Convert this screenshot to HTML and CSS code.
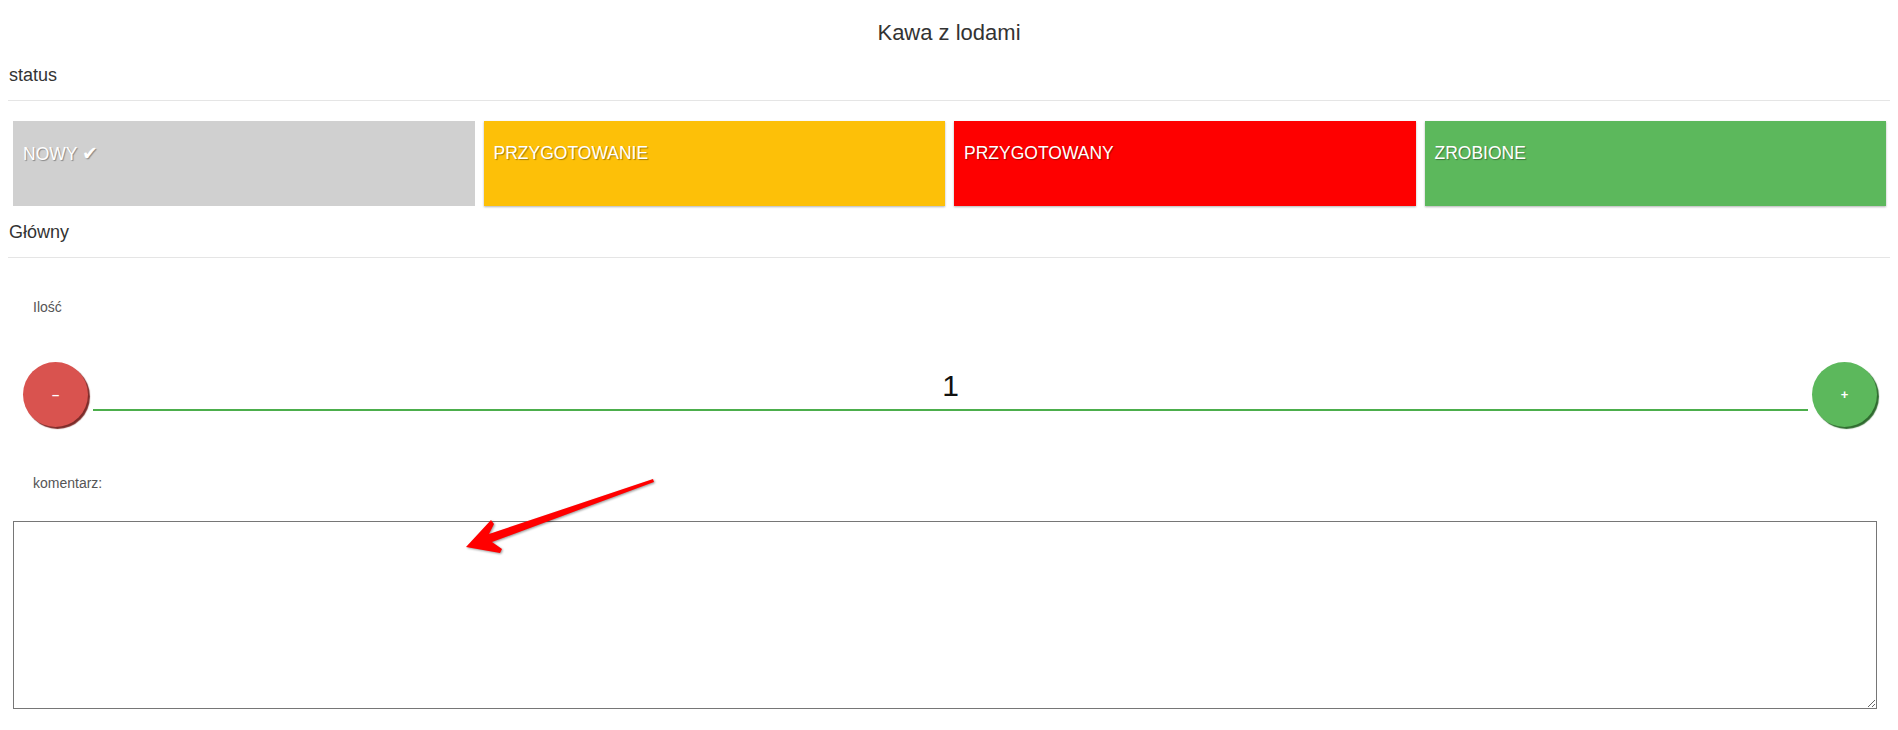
FILE: index.html
```html
<!DOCTYPE html>
<html lang="pl">

<head>
    <meta charset="UTF-8">
    <meta name="viewport" content="width=device-width, initial-scale=1.0">
    <title>Kawa z lodami</title>
    <link rel="stylesheet" href="styles.css">
</head>

<body>

    <div class="page">
        <h1 class="title">Kawa z lodami</h1>

        <div class="section-title">status</div>
        <div class="status-row">
            <div class="status status-new">NOWY <span class="check">&#10004;</span></div>
            <div class="status status-prep">PRZYGOTOWANIE</div>
            <div class="status status-ready">PRZYGOTOWANY</div>
            <div class="status status-done">ZROBIONE</div>
        </div>

        <div class="section-title section-main">Główny</div>

        <form class="order-form">
            <label class="field-label">Ilość</label>
            <div class="qty">
                <button type="button" class="circle-btn btn-minus">&ndash;</button>
                <input type="text" class="qty-input" value="1">
                <button type="button" class="circle-btn btn-plus">+</button>
            </div>

            <label class="field-label comment-label">komentarz:</label>
            <textarea class="comment"></textarea>
        </form>

        <!-- annotation arrow -->
        <svg class="arrow" width="220" height="90" viewBox="0 0 220 90">
            <path d="M16,77 L41,50 L44,54 L39,64 L203,9 L204,12 L42,72 L52,79 L50,83 Z" fill="#f00" />
        </svg>
    </div>

</body>

</html>
```

FILE: styles.css
```css
body {
    margin: 0;
    font-family: 'Liberation Sans', Arial, sans-serif;
    color: #333;
    background: #fff;
}

.page {
    position: relative;
    padding: 0 8px;
}

.title {
    margin: 0;
    padding-top: 20px;
    font-size: 22px;
    font-weight: normal;
    line-height: 26px;
    text-align: center;
    color: #333;
}

.section-title {
    margin-top: 17px;
    padding: 0 1px 13px;
    font-size: 18px;
    line-height: 24px;
    border-bottom: 1px solid #e5e5e5;
}

.section-main {
    margin-top: 14px;
}

.status-row {
    display: grid;
    grid-template-columns: repeat(4, 1fr);
    gap: 9px;
    padding: 20px 4px 0 5px;
}

.status {
    height: 85px;
    box-sizing: border-box;
    padding: 21px 10px;
    font-size: 17.5px;
    line-height: 22px;
    color: #fff;
    text-shadow: 1px 1px 1px rgba(0, 0, 0, 0.35);
    box-shadow: 0 1px 2px rgba(0, 0, 0, 0.3);
}

.check {
    font-family: 'DejaVu Sans', sans-serif;
    font-size: 19px;
    font-weight: bold;
}

.status-new {
    background-color: #d0d0d0;
    box-shadow: none;
}

.status-prep {
    background-color: #fdc008;
}

.status-ready {
    background-color: #fe0000;
}

.status-done {
    background-color: #5cb85c;
}

.order-form {
    display: flex;
    flex-direction: column;
    padding: 39px 13px 0 5px;
}

.field-label {
    padding-left: 20px;
    font-size: 14px;
    line-height: 20px;
    color: #555;
}

.qty {
    display: flex;
    align-items: flex-start;
    gap: 5px;
    margin-top: 45px;
    padding-left: 10px;
}

.circle-btn {
    flex: none;
    width: 65px;
    height: 65px;
    border: none;
    border-radius: 50%;
    padding: 0;
    color: #fff;
    font-family: 'Liberation Sans', Arial, sans-serif;
    font-size: 13px;
    font-weight: bold;
    cursor: pointer;
}

.btn-minus {
    background-color: #d9534f;
    box-shadow: 2px 2px 1px #7d2b29;
}

.btn-plus {
    margin-left: -1px;
    background-color: #5cb85c;
    box-shadow: 2px 2px 1px #2f6b2f;
}

.qty-input {
    flex: 1;
    min-width: 0;
    height: 49px;
    box-sizing: border-box;
    padding: 0;
    border: none;
    border-bottom: 2px solid #4cae4c;
    outline: none;
    text-align: center;
    font-family: 'Liberation Sans', Arial, sans-serif;
    font-size: 30px;
    color: #111;
}

.comment-label {
    margin-top: 46px;
}

.comment {
    margin-top: 28px;
    height: 188px;
    box-sizing: border-box;
    border: 1px solid #767676;
    font-family: 'Liberation Sans', Arial, sans-serif;
}

.arrow {
    position: absolute;
    left: 450px;
    top: 470px;
    pointer-events: none;
    filter: drop-shadow(1px 1px 1px rgba(0, 0, 0, 0.4));
}
```
